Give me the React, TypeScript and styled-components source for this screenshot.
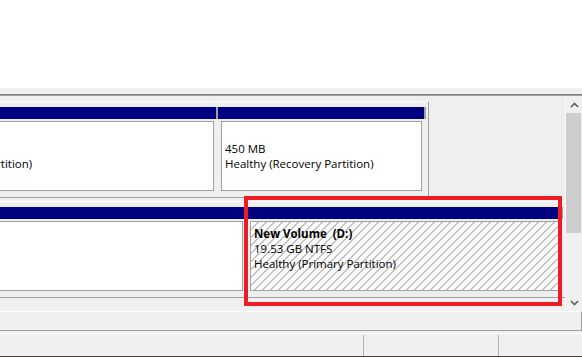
import React from 'react'
import styled, { createGlobalStyle } from 'styled-components'

const GlobalStyle = createGlobalStyle`
  html, body {
    margin: 0;
    padding: 0;
    background: #f0f0f0;
  }
  body {
    font-family: "Open Sans", "Noto Sans", sans-serif;
  }
`

// horizontal scroll offset of the graphical disk view
const SCROLL_X = 132

type Part = {
  width: number
  title?: string
  lines: string[]
  hatched?: boolean
  selected?: boolean
}

type Disk = {
  parts: Part[]
}

const disks: Disk[] = [
  {
    parts: [
      { width: 218 + SCROLL_X, lines: ['', '', 'Healthy (EFI System Partition)'] },
      { width: 208, lines: ['', '450 MB', 'Healthy (Recovery Partition)'] },
    ],
  },
  {
    parts: [
      { width: 247 + SCROLL_X, lines: [] },
      {
        width: 316,
        title: 'New Volume  (D:)',
        lines: ['19.53 GB NTFS', 'Healthy (Primary Partition)'],
        hatched: true,
        selected: true,
      },
    ],
  },
]

const Chevron = ({ up }: { up?: boolean }) => (
  <svg width="9" height="6" viewBox="0 0 9 6">
    <path
      d={up ? 'M1 5 L4.5 1.5 L8 5' : 'M1 1 L4.5 4.5 L8 1'}
      fill="none"
      stroke="#606060"
      strokeWidth="1.6"
    />
  </svg>
)

export default function App() {
  return (
    <>
      <GlobalStyle />
      <Window>
        <ListPane />
        <Splitter />

        <DiskPane>
          <DiskArea>
            <Canvas>
              {disks.map((disk, i) => (
                <DiskRow key={i}>
                  {disk.parts.map((part, j) => (
                    <Partition key={j} style={{ width: part.width }}>
                      <Header />
                      <Body $hatched={part.hatched}>
                        {part.title && <Title>{part.title}</Title>}
                        {part.lines.map((line, k) => (
                          <Line key={k}>{line}</Line>
                        ))}
                      </Body>
                      {part.selected && <Highlight />}
                    </Partition>
                  ))}
                </DiskRow>
              ))}
            </Canvas>
          </DiskArea>

          <VScroll>
            <ArrowButton>
              <Chevron up />
            </ArrowButton>
            <Thumb />
            <Track />
            <ArrowButton>
              <Chevron />
            </ArrowButton>
          </VScroll>
        </DiskPane>

        <Legend />

        <StatusBar>
          <StatusCell $width={363} />
          <StatusCell $width={134} />
          <StatusCell />
        </StatusBar>
        <BottomEdge />
      </Window>
    </>
  )
}

const Window = styled.div`
  width: 582px;
  height: 357px;
  display: flex;
  flex-direction: column;
  background: #f0f0f0;
  overflow: hidden;
  font-size: 11.5px;
  color: #000;
`
const ListPane = styled.div`
  height: 88px;
  background: #fff;
`
const Splitter = styled.div`
  height: 6px;
  background: #f0f0f0;
  border-bottom: 1px solid #808080;
`
const DiskPane = styled.div`
  height: 215px;
  display: flex;
  border-top: 1px solid #a0a0a0;
  background: #efefef;
`
const DiskArea = styled.div`
  flex: 1;
  overflow: hidden;
`
const Canvas = styled.div`
  display: flex;
  flex-direction: column;
  align-items: flex-start;
  gap: 3px;
  padding-top: 5px;
  margin-left: -${SCROLL_X}px;
`
const DiskRow = styled.div`
  display: flex;
  padding: 5px 2px 3px 0;
  border-top: 1px solid #fff;
  border-bottom: 1px solid #a0a0a0;
  border-right: 1px solid #a0a0a0;
`
const Partition = styled.div`
  position: relative;
  display: flex;
  flex-direction: column;
`
const Header = styled.div`
  height: 12px;
  background: #000080;
  border-right: 2px solid #a0a0a0;
`
const Body = styled.div<{ $hatched?: boolean }>`
  box-sizing: border-box;
  height: 70px;
  margin: 2px 4px 3px 3px;
  padding: 4px 3px 0;
  border: 1px solid #a0a0a0;
  background: ${p =>
    p.$hatched
      ? 'repeating-linear-gradient(135deg, #fff 0 4.5px, #c0c0c0 4.5px 5.657px)'
      : '#fff'};
  overflow: hidden;
  white-space: pre;
`
const Line = styled.div`
  height: 15px;
  line-height: 15px;
`
const Title = styled(Line)`
  font-weight: 700;
`
const Highlight = styled.div`
  position: absolute;
  left: -3px;
  top: -11px;
  width: 318px;
  height: 110px;
  box-sizing: border-box;
  border: 4px solid #ed1c24;
  pointer-events: none;
`
const VScroll = styled.div`
  width: 16px;
  display: flex;
  flex-direction: column;
  background: #f0f0f0;
  border-left: 1px solid #f8f8f8;
`
const ArrowButton = styled.div`
  height: 17px;
  display: flex;
  align-items: center;
  justify-content: center;
`
const Thumb = styled.div`
  height: 120px;
  margin-right: 1px;
  background: #cdcdcd;
`
const Track = styled.div`
  flex: 1;
`
const Legend = styled.div`
  height: 18px;
  border-top: 1px solid #fff;
  border-bottom: 1px solid #a0a0a0;
  border-right: 1px solid #a0a0a0;
  margin-bottom: 2px;
`
const StatusBar = styled.div`
  height: 22px;
  display: flex;
  border-top: 1px solid #fff;
`
const StatusCell = styled.div<{ $width?: number }>`
  ${p => (p.$width ? `width: ${p.$width}px;` : 'flex: 1;')}
  margin-top: 1px;
  & + & {
    border-left: 1px solid #b4b4b4;
  }
`
const BottomEdge = styled.div`
  height: 1px;
  background: #4b4237;
`
